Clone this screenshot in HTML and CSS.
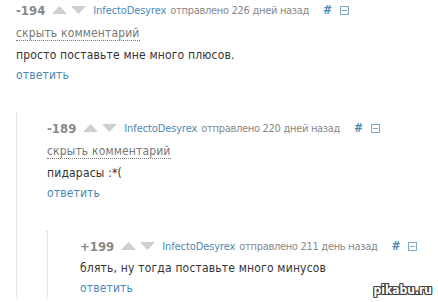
FILE: index.html
```html
<!DOCTYPE html>
<html>
<head>
<meta charset="utf-8">
<link rel="stylesheet" href="styles.css">
</head>
<body>
<div class="comment">
  <div class="head">
    <span class="score">-194</span>
    <span class="votes"><svg class="arr" width="15" height="8" viewBox="0 0 15 8"><path d="M7.5 0L15 8H0z"/></svg><svg class="arr" width="15" height="8" viewBox="0 0 15 8"><path d="M0 0H15L7.5 8z"/></svg></span>
    <span class="user">InfectoDesyrex</span>
    <span class="meta">отправлено 226 дней назад</span>
    <span class="hash">#</span>
    <span class="box"></span>
  </div>
  <div class="hide"><span>скрыть комментарий</span></div>
  <div class="text">просто поставьте мне много плюсов.</div>
  <div class="reply">ответить</div>
  <div class="children">
    <div class="comment">
      <div class="head">
        <span class="score">-189</span>
        <span class="votes"><svg class="arr" width="15" height="8" viewBox="0 0 15 8"><path d="M7.5 0L15 8H0z"/></svg><svg class="arr" width="15" height="8" viewBox="0 0 15 8"><path d="M0 0H15L7.5 8z"/></svg></span>
        <span class="user">InfectoDesyrex</span>
        <span class="meta">отправлено 220 дней назад</span>
        <span class="hash">#</span>
        <span class="box"></span>
      </div>
      <div class="hide"><span>скрыть комментарий</span></div>
      <div class="text">пидарасы :*(</div>
      <div class="reply">ответить</div>
      <div class="children">
        <div class="comment">
          <div class="head">
            <span class="score">+199</span>
            <span class="votes"><svg class="arr" width="15" height="8" viewBox="0 0 15 8"><path d="M7.5 0L15 8H0z"/></svg><svg class="arr" width="15" height="8" viewBox="0 0 15 8"><path d="M0 0H15L7.5 8z"/></svg></span>
            <span class="user">InfectoDesyrex</span>
            <span class="meta">отправлено 211 день назад</span>
            <span class="hash">#</span>
            <span class="box"></span>
          </div>
          <div class="text first">блять, ну тогда поставьте много минусов</div>
          <div class="reply">ответить</div>
        </div>
      </div>
    </div>
  </div>
</div>
<div class="logo">pikabu.ru</div>
</body>
</html>
```

FILE: styles.css
```css
html, body {
  margin: 0;
  padding: 0;
  background: #fff;
  width: 438px;
  height: 302px;
  overflow: hidden;
  position: relative;
  font-family: "DejaVu Sans Condensed", "DejaVu Sans", Verdana, sans-serif;
  font-size: 12px;
  color: #333;
}
.comment {
  padding-left: 16px;
}
.head {
  display: flex;
  align-items: center;
  height: 20px;
  white-space: nowrap;
  font-size: 11px;
}
.score {
  font-weight: bold;
  color: #888;
  font-size: 13px;
  margin-right: 7px;
}
.votes {
  display: flex;
  gap: 4px;
  margin-right: 7px;
}
.arr {
  fill: #cfcfcf;
  display: block;
}
.user {
  color: #4c88b4;
  margin-right: 4px;
  letter-spacing: -0.1px;
}
.meta {
  color: #888;
  letter-spacing: -0.3px;
}
.hash {
  color: #4c88b4;
  font-weight: bold;
  font-size: 12px;
  margin-left: 14px;
}
.box {
  width: 7px;
  height: 7px;
  border: 1px solid #7aa9cc;
  margin-left: 8px;
  position: relative;
}
.box::after {
  content: "";
  position: absolute;
  left: 1px;
  right: 1px;
  top: 3px;
  height: 1px;
  background: #7aa9cc;
}
.hide {
  margin-top: 3px;
  height: 22px;
  line-height: 20px;
  color: #777;
  letter-spacing: 0.15px;
}
.hide span {
  border-bottom: 1px dotted #777;
}
.text {
  height: 20px;
  line-height: 20px;
  color: #333;
  letter-spacing: 0.18px;
}
.text.first {
  margin-top: 2px;
}
.reply {
  height: 20px;
  line-height: 20px;
  color: #4c88b4;
  letter-spacing: 0.15px;
}
.children {
  margin-top: 28px;
  padding-top: 5px;
  border-left: 1px dotted #ccc;
}
.children > .comment {
  padding-left: 30px;
}
.children .children > .comment {
  padding-left: 32px;
}
.logo {
  position: absolute;
  right: 6px;
  bottom: 5px;
  font-weight: bold;
  font-size: 12px;
  color: #fff;
  text-shadow: 1px 0 0 #444, -1px 0 0 #444, 0 1px 0 #444, 0 -1px 0 #444, 1px 1px 0 #444, -1px -1px 0 #444, 1px -1px 0 #444, -1px 1px 0 #444;
}
```
